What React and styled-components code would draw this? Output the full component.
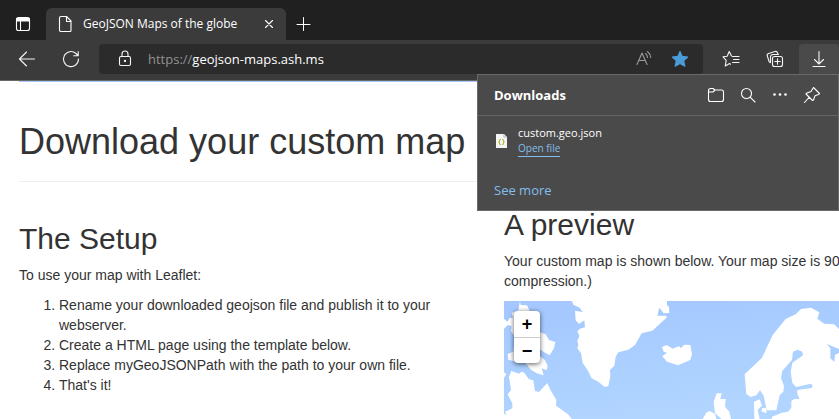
import React from 'react';
import styled, { createGlobalStyle } from 'styled-components';

const Global = createGlobalStyle`
  *, *::before, *::after { box-sizing: border-box; }
  body { margin: 0; background: #fff; }
  h1, h2, p, ol { margin: 0; font-weight: 400; }
  button, input { font: inherit; color: inherit; border: 0; background: none; padding: 0; }
`;

const uiFont = '"Open Sans", "Noto Sans", sans-serif';

const Window = styled.div`
  position: relative;
  height: 100vh;
  overflow: hidden;
  background: #fff;
`;

const TabStrip = styled.div`
  display: flex;
  align-items: flex-end;
  height: 40px;
  padding-left: 6px;
  background: #202020;
  color: #fff;
  font: 12px/16px ${uiFont};
`;

const StripButton = styled.button`
  display: grid;
  place-items: center;
  width: 34px;
  height: 32px;
`;

const Tab = styled.div`
  display: flex;
  align-items: center;
  width: 240px;
  height: 32px;
  margin-left: 6px;
  padding: 0 8px 0 11px;
  gap: 10px;
  border-radius: 6px 6px 0 0;
  background: #3b3b3b;
`;

const TabTitle = styled.span`
  flex: 1;
  white-space: nowrap;
`;

const CloseButton = styled.button`
  display: grid;
  place-items: center;
  width: 18px;
  height: 18px;
`;

const Toolbar = styled.div`
  display: flex;
  align-items: flex-start;
  gap: 4px;
  height: 41px;
  padding: 4px 0 0 7px;
  border-bottom: 1px solid #696969;
  background: #3b3b3b;
  color: #f5f5f5;
`;

const ToolButton = styled.button`
  display: grid;
  place-items: center;
  flex: none;
  width: 40px;
  height: 30px;
  border-radius: 4px 4px 0 0;
  background: ${(p) => (p.$active ? '#4a4a4a' : 'transparent')};
`;

const AddressBar = styled.div`
  display: flex;
  align-items: center;
  flex: 1;
  height: 30px;
  margin: 0 4px;
  padding: 0 5px 0 16px;
  border-radius: 4px;
  background: #2b2b2b;
  font: 13px/20px ${uiFont};
`;

const Address = styled.a`
  flex: 1;
  margin-left: 15px;
  color: #fff;
  text-decoration: none;
`;

const Scheme = styled.span`
  color: #929292;
`;

const BarButton = styled.button`
  display: grid;
  place-items: center;
  width: 36px;
  height: 30px;
`;

const Page = styled.main`
  padding-left: 19px;
  color: #333;
  font: 14px/20px "Liberation Sans", Arial, sans-serif;
`;

const PageHeader = styled.header`
  margin-bottom: 20px;
  padding: 40px 0 19px;
  border-top: 1px solid #a9c8fb;
  border-bottom: 1px solid #eee;
`;

const PageTitle = styled.h1`
  font-size: 36px;
  line-height: 40px;
`;

const Columns = styled.div`
  display: grid;
  grid-template-columns: 455fr 335fr;
  gap: 30px;
`;

const Column = styled.section`
  min-width: 0;
  padding-top: ${(p) => p.$top}px;
`;

const SectionTitle = styled.h2`
  margin-bottom: 10px;
  font-size: 30px;
  line-height: 33px;
`;

const Text = styled.p`
  margin-bottom: 10px;
  white-space: nowrap;
`;

const Steps = styled.ol`
  padding-left: 40px;
`;

const MapView = styled.div`
  position: relative;
  > svg { display: block; width: 100%; height: auto; }
`;

const ZoomControl = styled.div`
  position: absolute;
  top: 10px;
  left: 10px;
  width: 26px;
  border-radius: 4px;
  background: #fff;
  box-shadow: 0 1px 5px rgba(0, 0, 0, 0.65);
`;

const ZoomButton = styled.button`
  display: block;
  width: 26px;
  height: 26px;
  color: #000;
  font: bold 18px/26px "Liberation Sans", Arial, sans-serif;
  text-align: center;

  & + & { border-top: 1px solid #ccc; line-height: 24px; }
`;

const Flyout = styled.aside`
  position: absolute;
  top: 74px;
  right: 0;
  width: 362px;
  border: 1px solid #696969;
  background: #4a4a4a;
  color: #fff;
  font: 11px/16px ${uiFont};
`;

const FlyoutHeader = styled.header`
  display: flex;
  align-items: center;
  height: 41px;
  padding: 0 10px 0 16px;
  border-bottom: 1px solid #636363;
`;

const FlyoutTitle = styled.h2`
  flex: 1;
  font-size: 13px;
  font-weight: 700;
  line-height: 20px;
`;

const FlyoutButton = styled.button`
  display: grid;
  place-items: center;
  width: 32px;
  height: 32px;
`;

const Download = styled.div`
  display: flex;
  align-items: center;
  gap: 11px;
  padding: 9px 18px 0;
`;

const FileInfo = styled.div`
  display: flex;
  flex-direction: column;
  align-items: flex-start;
`;

const OpenLink = styled.a`
  border-bottom: 1px solid #83beec;
  color: #83beec;
  font-size: 10px;
  line-height: 15px;
  text-decoration: none;
`;

const MoreLink = styled.a`
  display: block;
  margin: 23px 0 10px 16px;
  color: #83beec;
  font-size: 13px;
  line-height: 20px;
  text-decoration: none;
`;

const Glyph = styled.svg`
  display: block;
  flex: none;
  fill: none;
  stroke: currentColor;
  stroke-width: 1.1;
  stroke-linecap: round;
  stroke-linejoin: round;
`;

const Icon = ({ w = 18, h = 18, children }) => (
  <Glyph width={w} height={h} viewBox={`0 0 ${w} ${h}`} aria-hidden="true">{children}</Glyph>
);

const WorldMap = () => (
  <svg viewBox="27 18 1005 354" role="img" aria-label="Map of the North Atlantic">
    <defs>
      <linearGradient id="sea" x1="0" y1="0" x2="0.3" y2="1">
        <stop offset="0" stopColor="#a3c7ff" />
        <stop offset="1" stopColor="#b1d5ff" />
      </linearGradient>
    </defs>
    <rect x="27" y="18" width="1005" height="354" fill="url(#sea)" />
    <g fill="#fff">
      <path d="M75 18 77 30 96 31 104 48 130 60 135 112 152 118 162 135 181 141 177 160 164 181 145 170 132 160 134 182 150 196 158 212 155 226 140 220 146 241 125 235 108 224 92 205 60 199 40 195 38 177 55 170 60 125 48 108 50 94 38 90 27 101V71L37 80 44 69 54 68 50 54 70 46Z" />
      <path d="M27 232 34 238 27 248ZM27 372V356L34 360 30 350 52 340V325L38 298 48 285 42 246 49 228 72 236 80 230 88 233 101 252 115 256 120 288 132 291 157 264 168 288 184 315 183 332 219 358 230 372Z" />
      <path d="M230 18 236 30 254 38 263 51 240 47 242 76 252 87 268 76 270 97 255 101 247 109 253 123 247 137 250 150 247 160 258 175 263 204 278 226 290 250 310 260 328 275 340 274 346 244 345 225 358 212 362 185 370 172 400 164 420 150 440 115 472 107 516 67 513 62 487 62 489 54 493 38 506 55 523 54 522 36 516 30V18Z" />
      <path d="M516 151 509 152 501 156 506 170 516 173 502 184 516 200 549 211 586 195 591 178 586 150 568 149 558 159 551 154 533 161Z" />
      <path d="M623 372 635 352 645 348 660 357 664 372ZM665 295H680L676 312H692L690 335 703 350 708 372H680L660 355 656 320Z" />
      <path d="M1032 165 1018 160 1010 155 997 148 1006 157 1007 190 1018 201 1020 185 1032 178V102L1017 88 988 86 967 71 973 52 948 38 918 42 902 58 872 72 833 120 801 188 749 238 754 297 767 306 784 301 795 286 806 302 815 346H844L854 300 865 290 867 273 858 250 862 227 891 195 894 170 908 164 922 170 924 181 892 203 887 230 892 264 903 276 948 266 953 272 950 279 907 285 907 297 914 312 898 312 889 318 889 338 879 350 861 353 831 365 830 372H1032Z" />
      <path d="M778 372 777 320 794 313 801 332 788 344 794 372ZM801 340 815 338 814 354 800 350Z" />
    </g>
    <path d="M995 147 1032 162V174L1026 176 1020 180 1018 201 1006 190V160Z" fill="#abceff" />
  </svg>
);

export default function App() {
  return (
    <Window>
      <Global />
      <TabStrip>
        <StripButton aria-label="Tab actions">
          <Icon w={16} h={16}>
            <rect x="1.5" y="1.5" width="13" height="13" rx="2" />
            <path d="M2 3h12M2 4.5h12" strokeWidth="2" />
            <path d="M5.5 5v9" />
          </Icon>
        </StripButton>
        <Tab>
          <Icon w={16} h={18}>
            <path d="M4 1.5h5.5l4.5 4.5v9.5a1 1 0 0 1-1 1H4a1.5 1.5 0 0 1-1.5-1V3A1.5 1.5 0 0 1 4 1.5ZM9.5 2v4.5H14" />
          </Icon>
          <TabTitle>GeoJSON Maps of the globe</TabTitle>
          <CloseButton aria-label="Close tab">
            <Icon><path d="m5.5 5.5 7 7m0-7-7 7" /></Icon>
          </CloseButton>
        </Tab>
        <StripButton aria-label="New tab">
          <Icon w={16} h={16}><path d="M8.500 1.5v13M2 8.500h13" strokeWidth="1" /></Icon>
        </StripButton>
      </TabStrip>

      <Toolbar>
        <ToolButton aria-label="Back">
          <Icon><path d="M16.5 9H1.5M8.5 2 1.5 9l7 7" /></Icon>
        </ToolButton>
        <ToolButton aria-label="Refresh">
          <Icon><path d="M16.5 9A7.5 7.5 0 1 1 14 3.5L16 5.5M16.2 1.500v4.3h-4.5" /></Icon>
        </ToolButton>
        <AddressBar>
          <Icon>
            <rect x="4.5" y="6.5" width="11" height="9" rx="1.5" />
            <path d="M7 6.500V4a3 3 0 0 1 6 0v2.500" />
            <circle cx="10" cy="11" r="0.6" fill="currentColor" />
          </Icon>
          <Address href="#map"><Scheme>https://</Scheme>geojson-maps.ash.ms</Address>
          <BarButton aria-label="Read aloud">
            <Icon>
              <g stroke="#999">
                <path d="M2 14.500 7 3l5 11.500M3.700 10.500h6.600M10.500 3.500q2 1.500 2 4M12.500 1.500q3 2.500 3.200 6" />
              </g>
            </Icon>
          </BarButton>
          <BarButton aria-label="Edit favorite">
            <Icon>
              <path d="m9 1.500 2.300 4.900 5.400.6-4 3.700 1.200 5.500L9 13.400l-4.900 2.800 1.200-5.500-4-3.700 5.400-.6Z" fill="#4b9bd8" stroke="#4b9bd8" />
            </Icon>
          </BarButton>
        </AddressBar>
        <ToolButton aria-label="Favorites">
          <Icon>
            <path d="M10.500 6.500H17M11.500 9.500H17M10.500 12.500H17M9.500 6 7.200 1.500 5.200 6.200 1 6.800l3.200 3.500-1 5.700 4.400-2.500.9.700" />
          </Icon>
        </ToolButton>
        <ToolButton $active={false} aria-label="Collections">
          <Icon>
            <rect x="6.500" y="6.500" width="10" height="10" rx="2" />
            <path d="M11.500 8.800v5.400M8.800 11.500h5.400M4.500 12.700q-1-.2-1.400-1.200l-1.800-5.500a2 2 0 0 1 1.300-2.500L9 1.500a2 2 0 0 1 2.500 1.300l.5 1.400M4.500 12V7A2.500 2.500 0 0 1 7 4.500h5.500" />
          </Icon>
        </ToolButton>
        <ToolButton $active aria-label="Downloads">
          <Icon><path d="M9 1.500v12M4.500 9.500 9 14l4.500-4.500M3 16.500h12" /></Icon>
        </ToolButton>
      </Toolbar>

      <Page>
        <PageHeader><PageTitle>Download your custom map</PageTitle></PageHeader>
        <Columns>
          <Column $top={20}>
            <SectionTitle>The Setup</SectionTitle>
            <Text>To use your map with Leaflet:</Text>
            <Steps>
              <li>Rename your downloaded geojson file and publish it to your webserver.</li>
              <li>Create a HTML page using the template below.</li>
              <li>Replace myGeoJSONPath with the path to your own file.</li>
              <li>That's it!</li>
            </Steps>
          </Column>
          <Column $top={6} id="map">
            <SectionTitle>A preview</SectionTitle>
            <Text>Your custom map is shown below. Your map size is 90<br />compression.)</Text>
            <MapView>
              <WorldMap />
              <ZoomControl>
                <ZoomButton aria-label="Zoom in">+</ZoomButton>
                <ZoomButton aria-label="Zoom out">−</ZoomButton>
              </ZoomControl>
            </MapView>
          </Column>
        </Columns>
      </Page>

      <Flyout aria-label="Downloads">
        <FlyoutHeader>
          <FlyoutTitle>Downloads</FlyoutTitle>
          <FlyoutButton aria-label="Open downloads folder">
            <Icon><path d="M1.500 4.500A2 2 0 0 1 3.500 2.500H6L8 4h6.500a2 2 0 0 1 2 2v7.500a2 2 0 0 1-2 2h-11a2 2 0 0 1-2-2ZM1.500 6H6l2-2" /></Icon>
          </FlyoutButton>
          <FlyoutButton aria-label="Search downloads">
            <Icon><circle cx="7.500" cy="7.500" r="5" /><path d="m11.300 11.300 4.700 4.700" /></Icon>
          </FlyoutButton>
          <FlyoutButton aria-label="More options">
            <Icon>
              <g fill="currentColor" stroke="none">
                <circle cx="3.500" cy="8.500" r="1.300" /><circle cx="9" cy="8.500" r="1.300" /><circle cx="14.500" cy="8.500" r="1.300" />
              </g>
            </Icon>
          </FlyoutButton>
          <FlyoutButton aria-label="Pin downloads">
            <Icon><path d="m10.500 1.500 6 6-1 1-3.500 1.300L10.500 14l-1 .5L3 8l1-1 4-1.500ZM6 11.500 1.500 16.500" /></Icon>
          </FlyoutButton>
        </FlyoutHeader>
        <Download>
          <Icon w={11} h={14}>
            <path d="M0 0h8l3 3v11H0Z" fill="#f5f5f5" stroke="none" />
            <path d="M8 0v3h3" stroke="#bbb" />
            <path d="M4.500 5.500q-1 0-1 1v1l-.8.500.8.500v1q0 1 1 1M6.500 5.500q1 0 1 1v1l.8.500-.8.500v1q0 1-1 1" stroke="#b5ba3c" />
          </Icon>
          <FileInfo>
            <span>custom.geo.json</span>
            <OpenLink href="#open">Open file</OpenLink>
          </FileInfo>
        </Download>
        <MoreLink href="#more">See more</MoreLink>
      </Flyout>
    </Window>
  );
}
